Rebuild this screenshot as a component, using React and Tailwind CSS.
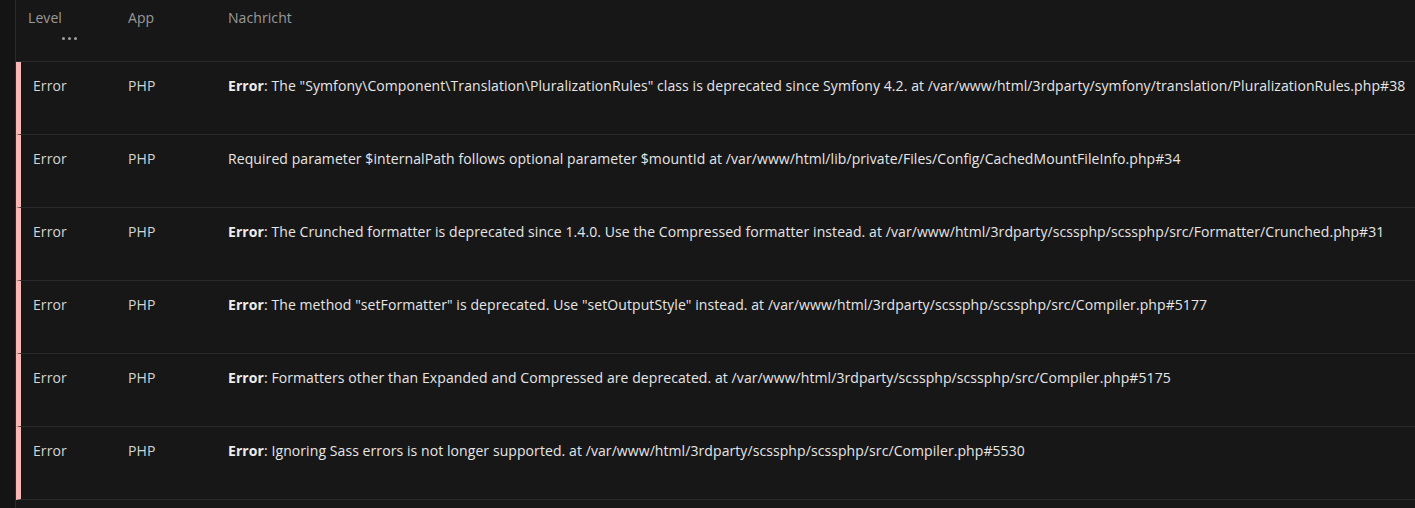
import React from "react";

const rows = [
  { bold: true, text: ': The "Symfony\\Component\\Translation\\PluralizationRules" class is deprecated since Symfony 4.2. at /var/www/html/3rdparty/symfony/translation/PluralizationRules.php#38' },
  { bold: false, text: "Required parameter $internalPath follows optional parameter $mountId at /var/www/html/lib/private/Files/Config/CachedMountFileInfo.php#34" },
  { bold: true, text: ": The Crunched formatter is deprecated since 1.4.0. Use the Compressed formatter instead. at /var/www/html/3rdparty/scssphp/scssphp/src/Formatter/Crunched.php#31" },
  { bold: true, text: ': The method "setFormatter" is deprecated. Use "setOutputStyle" instead. at /var/www/html/3rdparty/scssphp/scssphp/src/Compiler.php#5177' },
  { bold: true, text: ": Formatters other than Expanded and Compressed are deprecated. at /var/www/html/3rdparty/scssphp/scssphp/src/Compiler.php#5175" },
  { bold: true, text: ": Ignoring Sass errors is not longer supported. at /var/www/html/3rdparty/scssphp/scssphp/src/Compiler.php#5530" },
];

export default function App() {
  return (
    <div
      className="flex h-[508px] w-[1415px] overflow-hidden bg-[#171717] text-[14px] tracking-[0.08px]"
      style={{ fontFamily: '"Open Sans", "Noto Sans", sans-serif' }}
    >
      <div className="w-[16px] shrink-0 bg-[#141414] border-r border-[#2a2a2a]" />
      <div className="flex-1 flex flex-col">
        <div className="h-[62px] shrink-0 flex border-b border-[#2a2a2a] text-[#9a9a9a]">
          <div className="w-[112px] pl-3 pt-[8px] leading-[20px] flex flex-col">
            <span>Level</span>
            <span className="ml-[34px] mt-[9px] flex gap-[3px]">
              <span className="w-[3px] h-[3px] rounded-full bg-[#a0a0a0]" />
              <span className="w-[3px] h-[3px] rounded-full bg-[#a0a0a0]" />
              <span className="w-[3px] h-[3px] rounded-full bg-[#a0a0a0]" />
            </span>
          </div>
          <div className="w-[100px] pt-[8px] leading-[20px]">App</div>
          <div className="pt-[8px] leading-[20px]">Nachricht</div>
        </div>
        {rows.map((r, i) => (
          <div key={i} className="h-[73px] shrink-0 flex border-b border-[#2a2a2a] border-l-[5px] border-l-[#fab5b5]">
            <div className="w-[107px] pl-3 pt-[14px] leading-[20px] text-[#d4d4d4]">Error</div>
            <div className="w-[100px] pt-[14px] leading-[20px] text-[#d4d4d4]">PHP</div>
            <div className="pt-[14px] leading-[20px] text-[#e6e6e6] whitespace-nowrap">
              {r.bold ? <><b className="font-bold text-[#ececec]">Error</b>{r.text}</> : r.text}
            </div>
          </div>
        ))}
      </div>
    </div>
  );
}
